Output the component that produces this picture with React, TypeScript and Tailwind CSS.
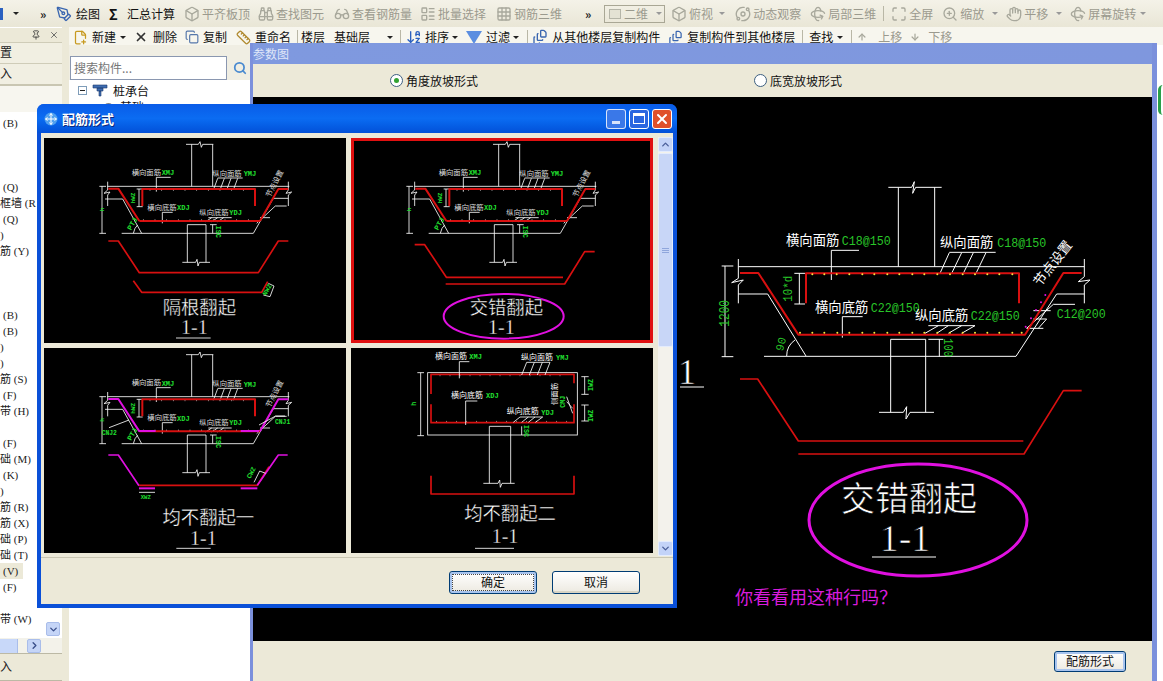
import React from "react";
import {
  ArrowDown,
  ArrowDownAZ,
  ArrowUp,
  Binoculars,
  Box,
  ChevronDown,
  ChevronRight,
  ChevronUp,
  Copy,
  Eye,
  FilePlus2,
  FileStack,
  Glasses,
  Grid3x3,
  Hand,
  LayoutList,
  Maximize,
  Orbit,
  PenTool,
  Pin,
  Rotate3d,
  Ruler,
  Search,
  X,
  ZoomIn,
} from "lucide-react";

const Caret = ({ className = "" }: { className?: string }) => (
  <span className={`w-0 h-0 border-l-[3px] border-r-[3px] border-t-[3px] border-l-transparent border-r-transparent border-t-[#222] ${className}`} />
);

const Sep = ({ className = "" }: { className?: string }) => <span className={`w-px h-[15px] bg-[#b9b7a6] ${className}`} />;

const Chevrons = ({ className = "" }: { className?: string }) => (
  <span className={`w-[8px] text-[12px] leading-none font-bold text-[#222] ${className}`}>»</span>
);

const GRAY = "#a8a89c";

const Toolbar1 = () => (
  <div className="h-[27px] flex items-center text-[12px] leading-none whitespace-nowrap bg-gradient-to-b from-[#f4f2e8] to-[#e9e6d6] text-[#111]">
    <span className="w-[3px] h-[12px] bg-[#2a60c0]" />
    <Caret className="ml-[10px]" />
    <Chevrons className="ml-[21px]" />
    <PenTool size={16} color="#3a66b0" className="ml-[8px]" />
    <span className="ml-[4px]">绘图</span>
    <span className="ml-[9px] w-[12px] font-bold text-[14px]">Σ</span>
    <span className="ml-[6px]">汇总计算</span>
    <div className="contents text-[#9b9a8e]">
      <Box size={16} color={GRAY} className="ml-[9px]" />
      <span className="ml-[2px]">平齐板顶</span>
      <Binoculars size={16} color={GRAY} className="ml-[8px]" />
      <span className="ml-[2px]">查找图元</span>
      <Glasses size={16} color={GRAY} className="ml-[10px]" />
      <span className="ml-[2px]">查看钢筋量</span>
      <LayoutList size={16} color={GRAY} className="ml-[8px]" />
      <span className="ml-[2px]">批量选择</span>
      <Grid3x3 size={16} color={GRAY} className="ml-[10px]" />
      <span className="ml-[2px]">钢筋三维</span>
      <Chevrons className="ml-[23px]" />
      <div className="ml-[11px] w-[61px] h-[18px] border border-[#a9a795] flex items-center pl-[4px]">
        <span className="w-[12px] h-[10px] border border-[#b5b5a8] bg-[#e4e2d4]" />
        <span className="ml-[3px]">二维</span>
        <Caret className="ml-[8px] border-t-[#999]" />
      </div>
      <Box size={16} color={GRAY} className="ml-[6px]" />
      <span className="ml-[2px]">俯视</span>
      <Caret className="ml-[6px] border-t-[#999]" />
      <Orbit size={16} color={GRAY} className="ml-[10px]" />
      <span className="ml-[2px]">动态观察</span>
      <Rotate3d size={16} color={GRAY} className="ml-[9px]" />
      <span className="ml-[2px]">局部三维</span>
      <Sep className="ml-[7px]" />
      <Maximize size={16} color={GRAY} className="ml-[7px]" />
      <span className="ml-[2px]">全屏</span>
      <ZoomIn size={16} color={GRAY} className="ml-[9px]" />
      <span className="ml-[2px]">缩放</span>
      <Caret className="ml-[8px] border-t-[#999]" />
      <Hand size={16} color={GRAY} className="ml-[8px]" />
      <span className="ml-[2px]">平移</span>
      <Caret className="ml-[8px] border-t-[#999]" />
      <Rotate3d size={16} color={GRAY} className="ml-[8px]" />
      <span className="ml-[2px]">屏幕旋转</span>
      <Caret className="ml-[4px] border-t-[#999]" />
    </div>
  </div>
);

const Toolbar2 = () => (
  <div className="h-[18px] shrink-0 flex items-center pl-[4px] pt-[2px] text-[12px] leading-none whitespace-nowrap bg-[#f7f6ee] text-[#111]">
    <FilePlus2 size={15} color="#c79a20" />
    <span className="ml-[4px]">新建</span>
    <Caret className="ml-[4px]" />
    <X size={14} color="#333" strokeWidth={3} className="ml-[8px]" />
    <span className="ml-[5px]">删除</span>
    <Copy size={14} color="#5577aa" className="ml-[8px]" />
    <span className="ml-[4px]">复制</span>
    <Ruler size={15} color="#b08a30" className="ml-[9px]" />
    <span className="ml-[4px]">重命名</span>
    <Sep className="ml-[6px]" />
    <span className="ml-[3px]">楼层</span>
    <span className="ml-[9px]">基础层</span>
    <Caret className="ml-[17px]" />
    <Sep className="ml-[7px]" />
    <ArrowDownAZ size={16} color="#2a60c0" className="ml-[5px]" />
    <span className="ml-[3px]">排序</span>
    <Caret className="ml-[3px]" />
    <span className="ml-[8px] w-0 h-0 border-l-[8px] border-r-[8px] border-t-[13px] border-l-transparent border-r-transparent border-t-[#5b8ee0]" />
    <span className="ml-[4px]">过滤</span>
    <Caret className="ml-[3px]" />
    <Sep className="ml-[8px]" />
    <FileStack size={16} color="#3a66b0" className="ml-[4px]" />
    <span className="ml-[4px]">从其他楼层复制构件</span>
    <FileStack size={15} color="#3a66b0" className="ml-[8px]" />
    <span className="ml-[4px]">复制构件到其他楼层</span>
    <Sep className="ml-[7px]" />
    <span className="ml-[6px]">查找</span>
    <Caret className="ml-[4px]" />
    <Sep className="ml-[8px]" />
    <ArrowUp size={10} color={GRAY} strokeWidth={3} className="ml-[5px]" />
    <span className="ml-[11px] text-[#9b9a8e]">上移</span>
    <ArrowDown size={10} color={GRAY} strokeWidth={3} className="ml-[8px]" />
    <span className="ml-[8px] text-[#9b9a8e]">下移</span>
  </div>
);

const rows = [
  "(B)", "", "", "", "(Q)", "框墙 (R", "(Q)", ")", "筋 (Y)", "", "", "", "(B)", "(B)", ")", ")",
  "筋 (S)", "(F)", "带 (H)", "", "(F)", "础 (M)", "(K)", ")", "筋 (R)", "筋 (X)", "础 (P)", "础 (T)", "(V)", "(F)", "", "带 (W)",
];

const Sidebar = () => (
  <div className="w-[62px] shrink-0 flex flex-col text-[11px] leading-none text-[#222] font-['Liberation_Serif','Noto_Sans_CJK_SC',serif]">
    <div className="h-[15px] mt-px flex items-center justify-end pr-[3px] gap-[8px] bg-[#ece9d8] border-b border-[#cfccb8]">
      <Pin size={10} color="#333" />
      <X size={10} color="#555" />
    </div>
    <div className="h-[21px] flex items-center bg-[#f1efe2] border-b border-[#cfccb8] text-[12px]">置</div>
    <div className="h-[23px] flex items-center bg-[#f1efe2] border-b-2 border-[#c9c6b2] text-[12px]">入</div>
    <div className="h-[26px] bg-[#f7f6ef]" />
    <div className="h-[532px] flex bg-white">
      <div className="w-[46px] pt-[3px] overflow-hidden whitespace-nowrap">
        {rows.map((r, i) => (
          <div key={i} className={`h-4 flex items-center ${r.startsWith("(") ? "pl-[3px]" : ""} ${r === "(V)" ? "w-[23px] bg-[#ece9d8]" : ""}`}>
            {r}
          </div>
        ))}
      </div>
      <div className="flex-1 flex flex-col justify-end pb-[2px]">
        <div className="h-[14px] w-[14px] bg-[#c5d5f7] border border-[#a9bdea] rounded-[2px] flex items-center justify-center">
          <ChevronDown size={11} color="#3a4f8a" strokeWidth={3} />
        </div>
      </div>
    </div>
    <div className="h-[15px] flex items-center bg-[#f3f2ea]">
      <div className="w-[18px] h-[14px] bg-[#c8d8f9] border-r border-[#a9bdea]" />
      <div className="ml-[9px] w-[14px] h-[14px] bg-[#c5d5f7] border border-[#a9bdea] rounded-[2px] flex items-center justify-center">
        <ChevronRight size={11} color="#3a4f8a" strokeWidth={3} />
      </div>
    </div>
    <div className="h-[27px] flex items-center bg-[#ece9d8] border-t border-[#bcb9a5] text-[12px]">入</div>
    <div className="flex-1 bg-[#ece9d8] border-t border-[#bcb9a5]" />
  </div>
);

const MiddlePanel = () => (
  <div className="w-[181px] shrink-0 h-full flex flex-col bg-white text-[12px] text-[#111]">
    <div className="h-[35px] shrink-0 bg-[#f0eee3] flex items-end">
      <div className="ml-px w-[157px] h-[24px] border border-[#8a97b0] bg-white flex items-center pl-[3px] text-[#777]">搜索构件...</div>
      <Search size={14} color="#4a8ad0" strokeWidth={3} className="ml-[6px] mb-[5px]" />
    </div>
    <div className="pt-[2px] pl-[9px]">
      <div className="h-[17px] flex items-center">
        <span className="w-[9px] h-[9px] border border-[#7f9db9] flex items-center justify-center">
          <span className="w-[5px] h-px bg-[#222]" />
        </span>
        <svg width="16" height="15" viewBox="0 0 16 15" className="ml-[5px]">
          <path d="M1 2h14v3H1zM5 5h6v3H5zM7 8h2v5H7z" fill="#3f6db0" stroke="#1d3a70" strokeWidth="0.6" />
        </svg>
        <span className="ml-[5px]">桩承台</span>
      </div>
      <div className="h-[16px] flex items-center pl-[24px]">
        <Eye size={13} color="#555" />
        <span className="ml-[5px]">基础</span>
      </div>
    </div>
  </div>
);

const Poly = ({ d, c = "#fff", w = 2.5 }: { d: string; c?: string; w?: number }) => (
  <polyline points={d} fill="none" stroke={c} strokeWidth={w} strokeLinejoin="round" />
);

const LIME = "#20e030";
const RED = "#d81010";
const PINK = "#e010e0";
const G2 = "#28c428";

type TProps = {
  x: number;
  y: number;
  s: number;
  c?: string;
  r?: number;
  anchor?: "start" | "middle";
  mono?: boolean;
  serif?: boolean;
  thin?: number;
  len?: number;
  children: React.ReactNode;
};

// thin：用黑色描边把字压细，接近 CAD 的细线字
const T = ({ x, y, s, c = "#fff", r, anchor = "start", mono, serif, thin, len, children }: TProps) => (
  <text
    x={x}
    y={y}
    fontSize={s}
    fill={c}
    textAnchor={anchor}
    fontWeight={c === LIME ? 700 : 400}
    stroke={thin ? "#000" : undefined}
    strokeWidth={thin}
    textLength={len}
    lengthAdjust={len ? "spacingAndGlyphs" : undefined}
    transform={r !== undefined ? `rotate(${r} ${x} ${y})` : undefined}
    className={mono ? "font-['Liberation_Mono',monospace]" : serif ? "font-['Liberation_Serif',serif]" : "font-['Noto_Sans_CJK_SC',sans-serif]"}
  >
    {children}
  </text>
);

// 缩略图的公共底图，坐标是放大三倍后的像素
const ThumbBase = ({ magenta = false }: { magenta?: boolean }) => {
  const topDots = [330, 365, 400, 435, 470, 505, 540, 575, 610];
  const botDots = [310, 345, 380, 415, 450, 485, 520, 555, 590, 625];
  return (
    <g>
      <Poly d="438,43 475,43 480,35 484,52 488,43 520,43" />
      <Poly d="455,43 455,169" />
      <Poly d="518,43 518,169" />
      <Poly d="202,169 748,169" />
      <Poly d="203,155 203,180 192,190 210,186 203,195 203,228" />
      <Poly d="745,155 745,180 738,190 755,186 745,195 745,228" />
      <Poly d="195,207 248,207 305,310" />
      <Poly d="245,310 640,310 700,205 745,205" />
      <Poly d="186,169 186,310" />
      <Poly d="178,169 198,169" />
      <Poly d="178,310 198,310" />
      <Poly d="297,177 297,230" />
      <Poly d="290,177 308,177" />
      <Poly d="290,230 308,230" />
      <Poly d="442,284 498,284" />
      <Poly d="442,284 442,397" />
      <Poly d="498,284 498,397" />
      <Poly d="427,397 467,397 471,388 474,408 478,397 510,397" />
      <Poly d="349,185 349,142 392,142" />
      <Poly d="367,280 367,247 398,247" />
      <Poly d="520,180 533,145" />
      <Poly d="540,180 553,145" />
      <Poly d="560,180 573,145" />
      <Poly d="580,180 593,145" />
      <Poly d="533,144 608,144" />
      <Poly d="497,275 515,263" />
      <Poly d="515,275 533,263" />
      <Poly d="533,275 551,263" />
      <Poly d="505,263 575,263" />
      <Poly d="660,263 690,263" />
      <Poly d="650,280 706,228 740,228" />
      <Poly d="280,310 285,295 293,285" />
      <Poly d="518,284 518,310" />
      <Poly d="510,284 530,284" />
      <Poly d="307,228 307,177 645,177 645,228" c={RED} w={6} />
      <Poly d="298,273 660,273" c={RED} w={6} />
      <Poly d="205,176 235,176 298,273" c={magenta ? PINK : RED} w={6} />
      <Poly d="660,273 715,177 745,177" c={magenta ? PINK : RED} w={6} />
      {topDots.map((x) => <circle key={x} cx={x} cy={181} r={1.4} fill="#fff" />)}
      {botDots.map((x) => <circle key={x} cx={x} cy={269} r={1.4} fill="#fff" />)}
      <T x={275} y={135} s={22} c="#ddd">横向面筋</T>
      <T x={365} y={136} s={21} c={LIME} mono>XMJ</T>
      <T x={517} y={138} s={22} c="#ddd">纵向面筋</T>
      <T x={611} y={139} s={21} c={LIME} mono>YMJ</T>
      <T x={322} y={240} s={22} c="#ddd">横向底筋</T>
      <T x={411} y={241} s={21} c={LIME} mono>XDJ</T>
      <T x={478} y={254} s={22} c="#ddd">纵向底筋</T>
      <T x={568} y={255} s={21} c={LIME} mono>YDJ</T>
      <T x={690} y={203} s={22} c="#ddd" r={-62}>节点设置</T>
      <T x={191} y={244} s={18} c={LIME} r={-90} mono>h</T>
      <T x={286} y={220} s={18} c={LIME} r={-90} mono>hWZ</T>
      <T x={273} y={302} s={22} c={LIME} r={-60} mono>PTJ</T>
      <T x={527} y={287} s={20} c={LIME} r={90} mono>ISC</T>
    </g>
  );
};

const ThumbTitle = ({ title, cx, ty, ny, ux1, ux2, uy }: { title: string; cx: number; ty: number; ny: number; ux1?: number; ux2?: number; uy?: number }) => (
  <g>
    <T x={cx} y={ty} s={55} anchor="middle" thin={0.9}>{title}</T>
    <T x={cx - 15} y={ny} s={60} anchor="middle" serif thin={1}>1-1</T>
    {ux1 !== undefined && <Poly d={`${ux1},${uy} ${ux2},${uy}`} />}
  </g>
);

const ThumbSvg = ({ vx, vy, children }: { vx: number; vy: number; children: React.ReactNode }) => (
  <svg className="w-full h-full block" viewBox={`${vx} ${vy} 906 615`}>{children}</svg>
);

const Thumb1 = () => (
  <ThumbSvg vx={12} vy={24}>
    <ThumbBase />
    <Poly d="205,333 235,333 298,428 655,428 715,333 745,333" c={RED} w={5} />
    <Poly d="280,452 305,487 665,487 683,455" c={RED} w={5} />
    <Poly d="685,460 702,468 690,500 670,495" />
    <T x={678} y={498} s={20} c={LIME} r={-60} mono>NWZ</T>
    <ThumbTitle title="隔根翻起" cx={478} ty={552} ny={612} ux1={408} ux2={512} uy={624} />
  </ThumbSvg>
);

const Thumb2 = () => (
  <ThumbSvg vx={12} vy={24}>
    <ThumbBase />
    <Poly d="203,344 233,344 298,442 648,442" c={RED} w={5} />
    <Poly d="296,462 653,462 713,365 743,365" c={RED} w={5} />
    <ellipse cx={470} cy={559} rx={180} ry={67} fill="none" stroke={PINK} strokeWidth={6} />
    <T x={478} y={553} s={55} anchor="middle" thin={0.9}>交错翻起</T>
    <T x={463} y={612} s={60} anchor="middle" serif thin={1}>1-1</T>
  </ThumbSvg>
);

const Thumb3 = () => (
  <ThumbSvg vx={15} vy={9}>
    <g transform="translate(3 -14)">
      <ThumbBase magenta />
    </g>
    <Poly d="300,258 350,258" c={PINK} w={6} />
    <Poly d="605,258 660,258" c={PINK} w={6} />
    <Poly d="210,248 270,225" />
    <Poly d="660,240 710,213 738,213" />
    <T x={188} y={270} s={19} c={LIME} mono>CNJ2</T>
    <T x={708} y={236} s={19} c={LIME} mono>CNJ1</T>
    <Poly d="208,330 238,330 300,422" c={PINK} w={5} />
    <Poly d="300,421 655,421 690,365" c={RED} w={5} />
    <Poly d="655,421 718,330 746,330" c={PINK} w={5} />
    <Poly d="300,430 348,430" c={PINK} w={6} />
    <Poly d="605,430 655,430" c={PINK} w={6} />
    <Poly d="300,442 348,442" />
    <Poly d="645,412 662,378 680,385" />
    <T x={305} y={463} s={17} c={LIME} mono>XWZ</T>
    <T x={634} y={402} s={20} c={LIME} r={-62} mono>CWZ</T>
    <ThumbTitle title="均不翻起一" cx={508} ty={538} ny={600} ux1={412} ux2={515} uy={610} />
  </ThumbSvg>
);

const Thumb4 = () => (
  <ThumbSvg vx={3} vy={9}>
    <rect x={233} y={83} width={449} height={187} fill="none" stroke="#fff" strokeWidth={2.5} />
    <Poly d="243,147 243,88 672,88 672,115" c={RED} w={5} />
    <Poly d="243,178 243,233 672,233 672,178" c={RED} w={5} />
    {[270, 300, 330, 360, 390, 420, 450, 480, 510, 540, 570, 600, 630].map((x) => <circle key={x} cx={x} cy={92} r={1.4} fill="#fff" />)}
    {[260, 290, 320, 350, 380, 410, 440, 470, 500, 530, 560, 590, 620, 650].map((x) => <circle key={x} cx={x} cy={229} r={1.4} fill="#fff" />)}
    <Poly d="212,83 212,272" />
    <Poly d="202,83 222,83" />
    <Poly d="202,272 222,272" />
    <Poly d="704,95 704,148" />
    <Poly d="694,95 716,95" />
    <Poly d="694,148 716,148" />
    <Poly d="704,180 704,228" />
    <Poly d="694,180 716,180" />
    <Poly d="694,228 716,228" />
    <Poly d="418,244 482,244" />
    <Poly d="418,244 418,415" />
    <Poly d="482,244 482,415" />
    <Poly d="400,415 444,415 449,405 451,427 456,415 494,415" />
    <Poly d="328,100 328,50 358,50" />
    <Poly d="347,240 347,168 382,168" />
    <Poly d="515,90 530,52 600,52 585,90" />
    <Poly d="538,90 553,52" />
    <Poly d="562,90 577,52" />
    <Poly d="490,232 510,216 578,216 556,232" />
    <Poly d="515,232 535,216" />
    <Poly d="535,232 555,216" />
    <Poly d="650,155 668,205" />
    <Poly d="650,170 668,190" />
    <Poly d="515,244 515,270" />
    <T x={255} y={42} s={24}>横向面筋</T>
    <T x={358} y={43} s={21} c={LIME} mono>XMJ</T>
    <T x={513} y={44} s={24}>纵向面筋</T>
    <T x={618} y={45} s={21} c={LIME} mono>YMJ</T>
    <T x={303} y={158} s={24}>横向底筋</T>
    <T x={408} y={159} s={21} c={LIME} mono>XDJ</T>
    <T x={470} y={208} s={24}>纵向底筋</T>
    <T x={574} y={209} s={21} c={LIME} mono>YDJ</T>
    <T x={620} y={180} s={22} r={-90}>侧面筋</T>
    <T x={646} y={188} s={20} c={LIME} r={-90} mono>CMJ</T>
    <T x={198} y={182} s={20} c={LIME} r={-90} mono>h</T>
    <T x={730} y={138} s={20} c={LIME} r={-90} mono>IWZ</T>
    <T x={730} y={230} s={20} c={LIME} r={-90} mono>IWZ</T>
    <T x={522} y={240} s={20} c={LIME} r={90} mono>ISC</T>
    <Poly d="243,392 243,447 672,447 672,392" c={RED} w={5} />
    <ThumbTitle title="均不翻起二" cx={480} ty={525} ny={595} ux1={375} ux2={492} uy={610} />
  </ThumbSvg>
);

const BigDrawing = () => {
  const top = [397, 433, 470, 508, 547, 583, 622, 658, 697, 733, 772, 810, 848, 885, 922, 958, 997];
  const bot = [360, 397, 433, 472, 508, 547, 583, 622, 658, 697, 733, 772, 810, 848, 885, 922, 958, 997, 1025];
  const purple = [[1037, 470], [1053, 445], [1068, 420], [1083, 397], [1096, 375]];
  return (
    <svg className="w-full h-full block" viewBox="0 0 899 544">
      <g transform="translate(427 73) scale(0.33333)">
        <Poly d="625,52 695,52 703,35 698,70 707,52 785,52" w={3} />
        <Poly d="655,52 655,290" w={3} />
        <Poly d="764,52 764,290" w={3} />
        <Poly d="175,290 1213,290" w={3} />
        <Poly d="175,267 175,325 155,338 190,330 175,345 175,400" w={3} />
        <Poly d="1213,267 1213,320 1195,335 1230,330 1213,345 1213,400" w={3} />
        <Poly d="175,372 263,372 378,558" w={3} />
        <Poly d="252,559 1008,559 1130,372 1213,372" w={3} />
        <Poly d="135,288 135,560" w={3} />
        <Poly d="125,288 160,288" w={3} />
        <Poly d="125,560 160,560" w={3} />
        <Poly d="358,310 358,402" w={3} />
        <Poly d="343,310 375,310" w={3} />
        <Poly d="343,402 375,402" w={3} />
        <Poly d="454,330 454,241 537,241" w={3} />
        <Poly d="487,503 487,440 548,440" w={3} />
        <Poly d="780,310 808,248" w={3} />
        <Poly d="815,310 845,248" w={3} />
        <Poly d="850,310 880,248" w={3} />
        <Poly d="888,310 918,248" w={3} />
        <Poly d="808,247 947,247" w={3} />
        <Poly d="735,490 775,467" w={3} />
        <Poly d="770,490 805,467" w={3} />
        <Poly d="805,490 845,467" w={3} />
        <Poly d="845,490 885,467" w={3} />
        <Poly d="745,467 885,467" w={3} />
        <Poly d="1040,475 1120,403 1185,403" w={3} />
        <Poly d="1060,422 1112,422" w={3} />
        <Poly d="1040,475 1090,475" w={3} />
        <Poly d="1060,447 1100,447 1075,475" w={3} />
        <path d="M320 558 A 58 58 0 0 1 345 510" fill="none" stroke="#fff" strokeWidth={3} />
        <Poly d="778,508 778,560" w={3} />
        <Poly d="745,508 790,508" w={3} />
        <Poly d="632,508 737,508" w={3} />
        <Poly d="632,508 632,727" w={3} />
        <Poly d="737,508 737,727" w={3} />
        <Poly d="597,727 670,727 680,710 678,747 690,727 762,727" w={3} />
        <Poly d="378,400 378,310 1017,310 1017,400" c={RED} w={6} />
        <Poly d="180,309 235,309 355,494 1035,494 1150,309 1205,309" c={RED} w={6} />
        {top.map((x) => <circle key={x} cx={x} cy={313} r={3} fill="#f5e642" />)}
        {bot.map((x) => <circle key={x} cx={x} cy={488} r={3} fill="#f5e642" />)}
        {purple.map(([x, y]) => <circle key={x} cx={x} cy={y} r={3} fill={PINK} />)}
        <T x={318} y={225} s={40}>横向面筋</T>
        <T x={485} y={225} s={40} c={G2} mono len={147}>C18@150</T>
        <T x={780} y={232} s={40}>纵向面筋</T>
        <T x={952} y={232} s={40} c={G2} mono len={147}>C18@150</T>
        <T x={405} y={425} s={40}>横向底筋</T>
        <T x={572} y={425} s={40} c={G2} mono len={147}>C22@150</T>
        <T x={705} y={450} s={40}>纵向底筋</T>
        <T x={872} y={450} s={40} c={G2} mono len={147}>C22@150</T>
        <T x={1130} y={444} s={40} c={G2} mono len={147}>C12@200</T>
        <T x={1080} y={352} s={40} r={-52}>节点设置</T>
        <T x={148} y={470} s={44} c={G2} r={-90} mono len={80}>1200</T>
        <T x={336} y={395} s={36} c={G2} r={-90} mono len={78}>10*d</T>
        <T x={308} y={545} s={34} c={G2} r={-75} mono>90</T>
        <T x={793} y={505} s={38} c={G2} r={90} mono len={56}>100</T>
        <Poly d="180,627 233,627 355,813 1030,813" c={RED} w={5} />
        <Poly d="355,852 1032,852 1150,662 1205,662" c={RED} w={5} />
      </g>
      <g transform="translate(-253 -97)">
        <T x={687} y={384} s={36} serif anchor="middle" thin={0.5}>1</T>
        <Poly d="680,387 704,387" w={1} />
        <ellipse cx={918} cy={520} rx={109} ry={56} fill="none" stroke={PINK} strokeWidth={3} />
        <T x={909} y={511} s={34} anchor="middle" thin={0.6}>交错翻起</T>
        <T x={905} y={551} s={38} anchor="middle" serif thin={0.7}>1-1</T>
        <Poly d="872,557 936,557" w={1} />
        <T x={735} y={604} s={18} c="#d81cdc">你看看用这种行吗？</T>
      </g>
    </svg>
  );
};

const XpButton = ({ label, focus, active, className = "" }: { label: string; focus?: boolean; active?: boolean; className?: string }) => (
  <button
    className={`h-[23px] flex items-center justify-center rounded-[3px] border border-[#003c74] bg-gradient-to-b from-white to-[#ece9e0] text-[12px] text-[#111] ${active ? "shadow-[inset_0_0_0_2px_#a8c4ee]" : "shadow-[inset_0_-2px_0_#d8d4c4]"} ${focus ? "outline-1 outline-dotted -outline-offset-4 outline-[#444]" : ""} ${className}`}
  >
    {label}
  </button>
);

const ScrollBtn = ({ up }: { up?: boolean }) => (
  <div className="h-[15px] shrink-0 bg-[#c3d3f8] border border-[#e4ecfd] rounded-[2px] flex items-center justify-center">
    {up ? <ChevronUp size={11} color="#4a5f9a" strokeWidth={3} /> : <ChevronDown size={11} color="#4a5f9a" strokeWidth={3} />}
  </div>
);

const ParamWindow = () => (
  <div className="absolute left-[250px] top-[43px] w-[907px] h-[638px] flex flex-col bg-[#7b90dc] border-l-[3px] border-r-[5px] border-[#7b90dc] text-[12px] text-[#111]">
    <div className="h-[21px] shrink-0 flex items-center text-[#dfe6f8] bg-gradient-to-r from-[#7f99df] to-[#7f97de]">参数图</div>
    <div className="h-[33px] shrink-0 flex items-center pl-[137px] bg-[#ece9d8]">
      <span className="w-[13px] h-[13px] rounded-full border border-[#3d5f80] bg-white flex items-center justify-center">
        <span className="w-[5px] h-[5px] rounded-full bg-[#31a231]" />
      </span>
      <span className="ml-[3px]">角度放坡形式</span>
      <span className="ml-[276px] w-[13px] h-[13px] rounded-full border border-[#3d5f80] bg-white" />
      <span className="ml-[3px]">底宽放坡形式</span>
    </div>
    <div className="flex-1 bg-black">
      <BigDrawing />
    </div>
    <div className="h-[40px] shrink-0 flex items-center justify-end pr-[26px] bg-[#ece9d8]">
      <XpButton label="配筋形式" active className="w-[72px] !h-[21px]" />
    </div>
  </div>
);

const Dialog = () => (
  <div className="absolute left-[37px] top-[104px] w-[640px] h-[504px] flex flex-col bg-[#0a50d8] rounded-t-[7px] px-[4px] pb-[4px]">
    <div className="-mx-[4px] h-[29px] shrink-0 flex items-center rounded-t-[7px] pl-[7px] pr-[5px] bg-gradient-to-b from-[#0a5ce8] via-[#0b6cf2] to-[#0350d8] text-white">
      <svg width="14" height="14" viewBox="0 0 14 14">
        <circle cx="7" cy="7" r="6.5" fill="#4fa0f0" />
        <path d="M7 1.5v11M1.5 7h11M7 1.5 5.5 3.5M7 1.5 8.5 3.5M7 12.5 5.5 10.5M7 12.5 8.5 10.5M1.5 7l2-1.5M1.5 7l2 1.5M12.5 7l-2-1.5M12.5 7l-2 1.5" stroke="#fff" strokeWidth="1" fill="none" />
      </svg>
      <span className="ml-[4px] text-[13px] font-bold [text-shadow:1px_1px_0_#0a2a80]">配筋形式</span>
      <div className="ml-auto flex gap-[3px]">
        <div className="w-[20px] h-[20px] rounded-[3px] border border-white/80 bg-[#3a78e8] flex items-end pb-[4px] pl-[5px]">
          <span className="w-[8px] h-[3px] bg-white/80" />
        </div>
        <div className="w-[20px] h-[20px] rounded-[3px] border border-white bg-[#2a66e0] flex items-center justify-center">
          <span className="w-[12px] h-[11px] border border-t-[3px] border-white" />
        </div>
        <div className="w-[20px] h-[20px] rounded-[3px] border border-white bg-[#e0502a] flex items-center justify-center">
          <X size={16} color="#fff" strokeWidth={3} />
        </div>
      </div>
    </div>
    <div className="flex-1 flex flex-col bg-[#ece9d8] min-h-0">
      <div className="flex pl-[3px] pt-[5px]">
        <div className="grid grid-cols-[302px_302px] grid-rows-[205px_205px] gap-[5px]">
          <div className="bg-black"><Thumb1 /></div>
          <div className="bg-black shadow-[inset_0_0_0_3px_#e01010]"><Thumb2 /></div>
          <div className="bg-black"><Thumb3 /></div>
          <div className="bg-black"><Thumb4 /></div>
        </div>
        <div className="ml-[5px] -mt-px w-[15px] h-[419px] flex flex-col bg-[#f3f2ec]">
          <ScrollBtn up />
          <div className="h-[194px] mt-px bg-[#c8d6f7] border border-[#e4ecfd] rounded-[2px] flex flex-col items-center justify-center gap-px">
            <span className="w-[7px] h-px bg-[#8fa6dc]" />
            <span className="w-[7px] h-px bg-[#8fa6dc]" />
            <span className="w-[7px] h-px bg-[#8fa6dc]" />
          </div>
          <div className="flex-1" />
          <ScrollBtn />
        </div>
      </div>
      <div className="mt-px border-t border-[#c9c6b2] flex-1 flex items-center justify-end pr-[33px] gap-[15px] pt-[2px]">
        <XpButton label="确定" focus active className="w-[88px]" />
        <XpButton label="取消" className="w-[88px]" />
      </div>
    </div>
  </div>
);

export default function App() {
  return (
    <div className="relative w-[1163px] h-[681px] overflow-hidden flex flex-col bg-white font-['Noto_Sans_CJK_SC','Liberation_Sans',sans-serif]">
      <Toolbar1 />
      <div className="flex-1 flex min-h-0">
        <Sidebar />
        <div className="w-[7px] shrink-0 bg-[#ece9d8]" />
        <div className="flex-1 flex flex-col min-w-0">
          <Toolbar2 />
          <div className="flex-1 flex min-h-0">
            <MiddlePanel />
            <div className="flex-1 bg-white flex justify-end pt-[40px]">
              <span className="w-[5px] h-[30px] rounded-l-full border-l-[3px] border-[#2aa04a]" />
            </div>
          </div>
        </div>
      </div>
      <ParamWindow />
      <Dialog />
    </div>
  );
}
